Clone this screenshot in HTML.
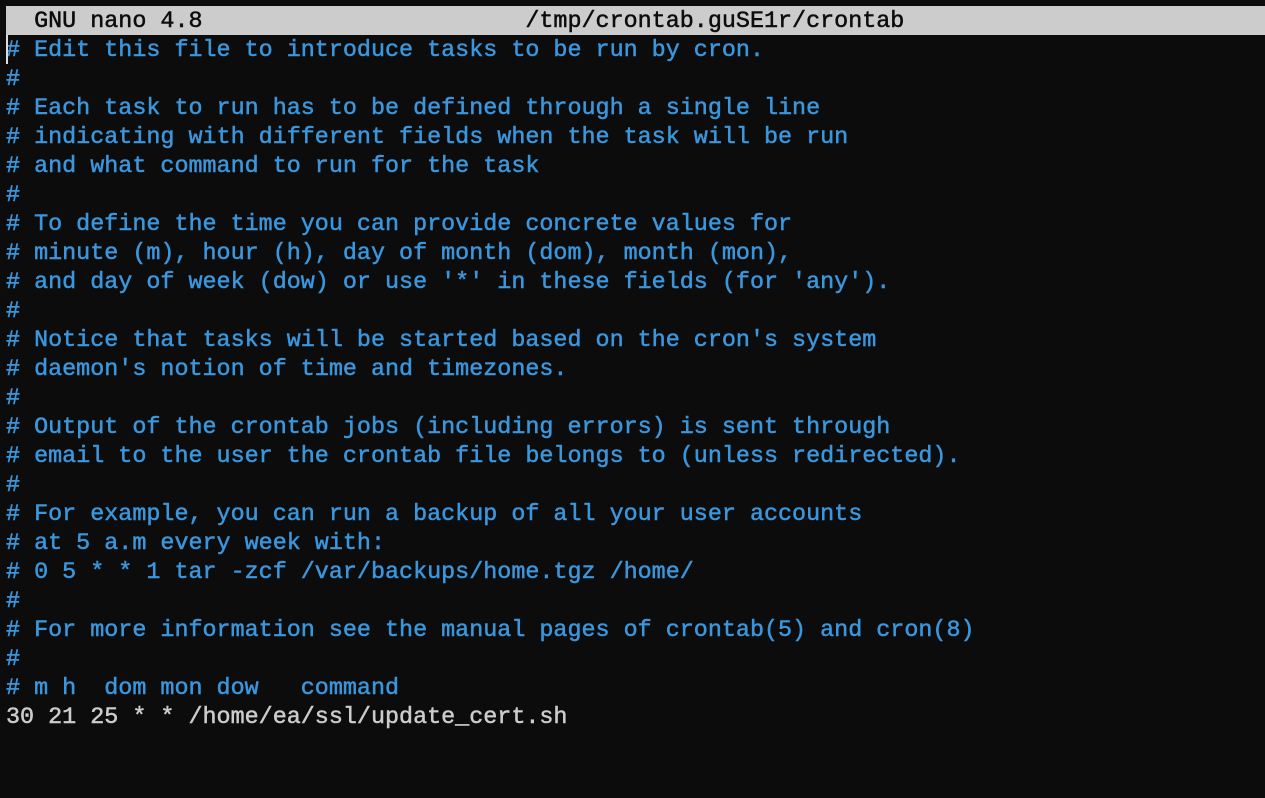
<!DOCTYPE html>
<html><head><meta charset="utf-8"><style>
html,body{margin:0;padding:0;background:#0c0c0c;width:1265px;height:798px;overflow:hidden}
.t{position:absolute;left:6px;top:6px;font-family:"Liberation Mono","DejaVu Sans Mono",monospace;font-size:23.4px;line-height:29px;white-space:pre;color:#3a96dd;-webkit-text-stroke:0.5px currentColor}
.bar{background:#cccccc;color:#0c0c0c;width:1259px;height:29px}
.w{color:#cccccc}
.cur{position:absolute;left:6px;top:35px;width:2px;height:29px;background:#ddd}
.in{position:relative;top:2px}
</style></head><body>
<div class="t"><div class="bar"><div class="in">  GNU nano 4.8                       /tmp/crontab.guSE1r/crontab</div></div><div class="in"># Edit this file to introduce tasks to be run by cron.
#
# Each task to run has to be defined through a single line
# indicating with different fields when the task will be run
# and what command to run for the task
#
# To define the time you can provide concrete values for
# minute (m), hour (h), day of month (dom), month (mon),
# and day of week (dow) or use '*' in these fields (for 'any').
#
# Notice that tasks will be started based on the cron's system
# daemon's notion of time and timezones.
#
# Output of the crontab jobs (including errors) is sent through
# email to the user the crontab file belongs to (unless redirected).
#
# For example, you can run a backup of all your user accounts
# at 5 a.m every week with:
# 0 5 * * 1 tar -zcf /var/backups/home.tgz /home/
#
# For more information see the manual pages of crontab(5) and cron(8)
#
# m h  dom mon dow   command
<span class="w">30 21 25 * * /home/ea/ssl/update_cert.sh</span></div></div>
<div class="cur"></div>
</body></html>
